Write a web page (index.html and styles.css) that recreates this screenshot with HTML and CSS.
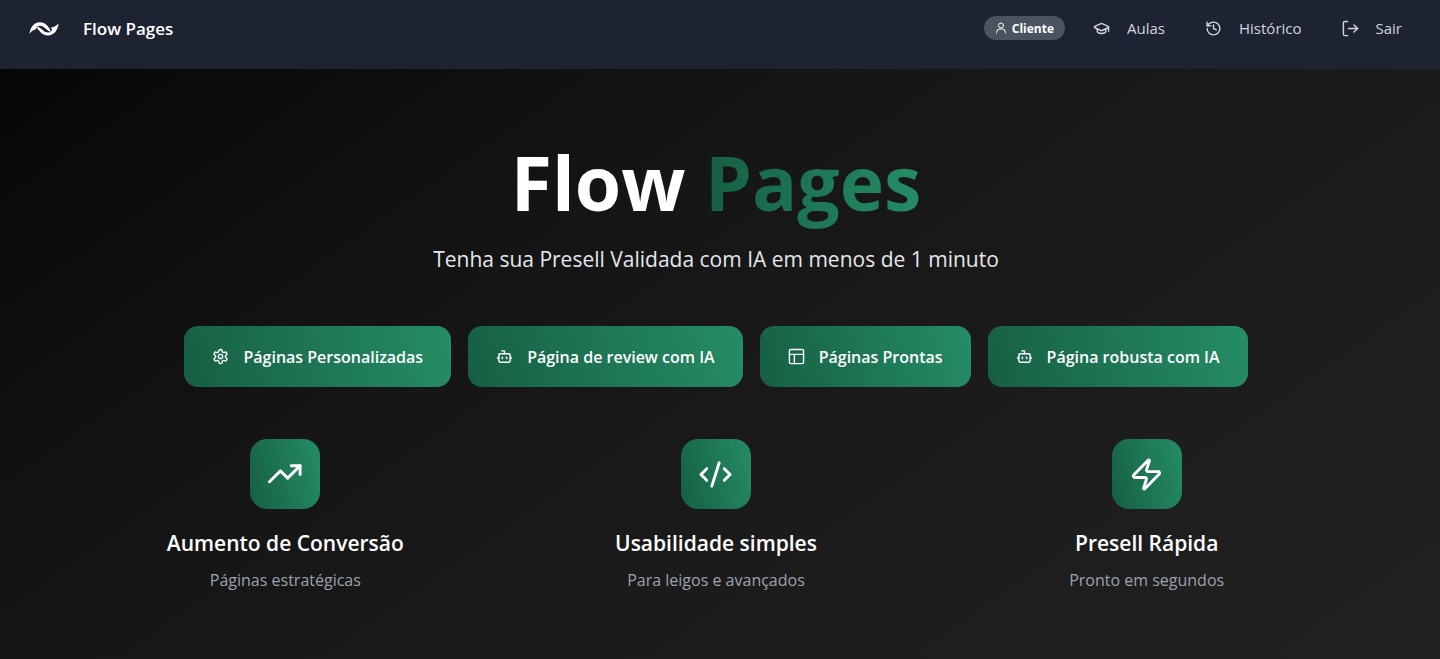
FILE: index.html
```html
<!DOCTYPE html>
<html lang="pt-BR">
<head>
  <meta charset="UTF-8">
  <meta name="viewport" content="width=device-width, initial-scale=1.0">
  <title>Flow Pages</title>
  <link rel="stylesheet" href="styles.css">
</head>
<body>

  <header class="navbar">
    <a class="brand" href="#">
      <svg class="brand-logo" viewBox="0 0 30 16" fill="currentColor">
        <path d="M0.500 13 C1 6 5.500 1.300 11 1.300 C16.500 1.300 19 5 21.500 9.500 C22 10.500 21 11 20 10.300 C16.500 8 14.500 4.800 11 4.800 C8.500 4.800 7.500 6.500 7 8.200 C4.500 8.500 2.500 10 0.500 13 Z"/>
        <path d="M29.500 2.500 C29 9.500 24.500 14.500 19 14.500 C13.500 14.500 11 10.500 8.300 7.500 C7.800 6.300 9 5.600 10 6.300 C13.500 8.500 15.500 11.500 19 11.500 C21.500 11.500 22.800 10 23.300 8.500 L21.500 6.800 C24.500 6.500 27 5 29.500 2.500 Z"/>
      </svg>
      <span class="brand-name">Flow Pages</span>
    </a>

    <nav class="nav-links">
      <span class="badge">
        <svg class="icon icon-xs" viewBox="0 0 24 24"><circle cx="12" cy="7" r="5"/><path d="M3 22v-1a7 7 0 0 1 7-7h4a7 7 0 0 1 7 7v1"/></svg>
        Cliente
      </span>
      <a class="nav-link" href="#">
        <svg class="icon icon-sm" viewBox="0 0 24 24"><path d="M21.420 10.922a1 1 0 0 0-.019-1.838L12.830 5.180a2 2 0 0 0-1.660 0L2.600 9.080a1 1 0 0 0 0 1.832l8.570 3.908a2 2 0 0 0 1.660 0z"/><path d="M22 10v6"/><path d="M6 12.500V16a6 3 0 0 0 12 0v-3.500"/></svg>
        Aulas
      </a>
      <a class="nav-link" href="#">
        <svg class="icon icon-sm" viewBox="0 0 24 24"><path d="M3 12a9 9 0 1 0 9-9 9.750 9.750 0 0 0-6.740 2.740L3 8"/><path d="M3 3v5h5"/><path d="M12 7v5l4 2"/></svg>
        Histórico
      </a>
      <a class="nav-link" href="#">
        <svg class="icon icon-sm" viewBox="0 0 24 24"><path d="M8 22H4a2 2 0 0 1-2-2V4a2 2 0 0 1 2-2h4"/><path d="m17 17 5-5-5-5"/><path d="M22 12H9"/></svg>
        Sair
      </a>
    </nav>
  </header>

  <main class="hero">
    <h1 class="title">Flow <span class="title-accent">Pages</span></h1>
    <p class="subtitle">Tenha sua Presell Validada com IA em menos de 1 minuto</p>

    <div class="actions">
      <button class="btn" type="button">
        <svg class="icon icon-sm" viewBox="0 0 24 24"><path d="M12.220 2h-.44a2 2 0 0 0-2 2v.18a2 2 0 0 1-1 1.730l-.43.25a2 2 0 0 1-2 0l-.15-.08a2 2 0 0 0-2.730.73l-.22.38a2 2 0 0 0 .73 2.730l.15.1a2 2 0 0 1 1 1.720v.51a2 2 0 0 1-1 1.740l-.15.09a2 2 0 0 0-.73 2.730l.22.38a2 2 0 0 0 2.730.73l.15-.08a2 2 0 0 1 2 0l.43.25a2 2 0 0 1 1 1.730V20a2 2 0 0 0 2 2h.44a2 2 0 0 0 2-2v-.18a2 2 0 0 1 1-1.730l.43-.25a2 2 0 0 1 2 0l.15.08a2 2 0 0 0 2.730-.73l.22-.39a2 2 0 0 0-.73-2.730l-.15-.08a2 2 0 0 1-1-1.740v-.5a2 2 0 0 1 1-1.740l.15-.09a2 2 0 0 0 .73-2.730l-.22-.38a2 2 0 0 0-2.730-.73l-.15.08a2 2 0 0 1-2 0l-.43-.25a2 2 0 0 1-1-1.730V4a2 2 0 0 0-2-2z"/><circle cx="12" cy="12" r="3"/></svg>
        Páginas Personalizadas
      </button>
      <button class="btn" type="button">
        <svg class="icon icon-sm" viewBox="0 0 24 24"><path d="M12 8V4H8"/><rect width="16" height="12" x="4" y="8" rx="2"/><path d="M2 14h2"/><path d="M20 14h2"/><path d="M15 13v2"/><path d="M9 13v2"/></svg>
        Página de review com IA
      </button>
      <button class="btn" type="button">
        <svg class="icon icon-sm" viewBox="0 0 24 24"><rect width="20" height="20" x="2" y="2" rx="2"/><path d="M2 9h20"/><path d="M9 22V9"/></svg>
        Páginas Prontas
      </button>
      <button class="btn" type="button">
        <svg class="icon icon-sm" viewBox="0 0 24 24"><path d="M12 8V4H8"/><rect width="16" height="12" x="4" y="8" rx="2"/><path d="M2 14h2"/><path d="M20 14h2"/><path d="M15 13v2"/><path d="M9 13v2"/></svg>
        Página robusta com IA
      </button>
    </div>

    <div class="features">
      <div class="feature">
        <div class="feature-icon">
          <svg class="icon icon-lg" viewBox="0 0 24 24"><path d="M16 6h6v6"/><path d="m22 6-8.500 8.500-5-5L1 17"/></svg>
        </div>
        <h2 class="feature-title">Aumento de Conversão</h2>
        <p class="feature-text">Páginas estratégicas</p>
      </div>
      <div class="feature">
        <div class="feature-icon">
          <svg class="icon icon-lg" viewBox="0 0 24 24"><path d="m18 16 4-4-4-4"/><path d="m6 8-4 4 4 4"/><path d="m14.500 4-5 16"/></svg>
        </div>
        <h2 class="feature-title">Usabilidade simples</h2>
        <p class="feature-text">Para leigos e avançados</p>
      </div>
      <div class="feature">
        <div class="feature-icon">
          <svg class="icon icon-lg" viewBox="0 0 24 24"><path d="M4 14a1 1 0 0 1-.78-1.630l9.900-10.200a.5.5 0 0 1 .86.46l-1.920 6.020A1 1 0 0 0 13 10h7a1 1 0 0 1 .78 1.630l-9.900 10.200a.5.5 0 0 1-.86-.46l1.920-6.020A1 1 0 0 0 11 14z"/></svg>
        </div>
        <h2 class="feature-title">Presell Rápida</h2>
        <p class="feature-text">Pronto em segundos</p>
      </div>
    </div>
  </main>

</body>
</html>
```

FILE: styles.css
```css
* {
  box-sizing: border-box;
  margin: 0;
  padding: 0;
}

body {
  min-height: 100vh;
  display: flex;
  flex-direction: column;
  font-family: "Open Sans", "Noto Sans", sans-serif;
  background: linear-gradient(145deg, #040404 0%, #0c0c0d 15%, #151515 38%, #1b1b1b 65%, #222 100%);
  color: #fff;
}

a {
  color: inherit;
  text-decoration: none;
}

.icon {
  flex-shrink: 0;
  fill: none;
  stroke: currentColor;
  stroke-width: 2;
  stroke-linecap: round;
  stroke-linejoin: round;
}

.icon-xs {
  width: 12px;
  height: 12px;
}

.icon-sm {
  width: 17px;
  height: 17px;
}

.icon-lg {
  width: 35px;
  height: 35px;
}

/* Navbar */
.navbar {
  display: flex;
  justify-content: space-between;
  align-items: flex-start;
  height: 69px;
  padding: 16px 38px 0 29px;
  background: #1e2332;
}

.brand {
  display: flex;
  align-items: center;
  gap: 24px;
}

.brand-logo {
  width: 30px;
  height: 16px;
}

.brand-name {
  font-size: 17px;
  line-height: 26px;
  font-weight: 600;
}

.nav-links {
  display: flex;
  align-items: center;
  color: #d1d5db;
}

.badge {
  display: flex;
  align-items: center;
  gap: 5px;
  height: 24px;
  margin-right: 28px;
  padding: 0 11px;
  border-radius: 12px;
  background: #4b5260;
  color: #fff;
  font-size: 12px;
  font-weight: 700;
}

.nav-link {
  display: flex;
  align-items: center;
  gap: 17px;
  font-size: 15px;
  line-height: 24px;
}

.nav-link + .nav-link {
  margin-left: 40px;
}

/* Hero */
.hero {
  flex: 1;
  display: flex;
  flex-direction: column;
  align-items: center;
  padding: 69px 78px 40px 70px;
  text-align: center;
}

.title {
  font-size: 75px;
  line-height: 88px;
  font-weight: 700;
}

.title-accent {
  background: linear-gradient(90deg, #165f43, #258d66);
  background-clip: text;
  -webkit-background-clip: text;
  color: transparent;
}

.subtitle {
  margin-top: 17px;
  font-size: 21px;
  line-height: 32px;
  color: #e5e7eb;
}

.actions {
  display: flex;
  flex-wrap: wrap;
  justify-content: center;
  gap: 17px;
  margin-top: 51px;
}

.btn {
  display: flex;
  align-items: center;
  gap: 14px;
  height: 61px;
  padding: 0 28px;
  border: none;
  border-radius: 14px;
  background: linear-gradient(75deg, #165f43, #258d66);
  color: #fff;
  font-family: inherit;
  font-size: 16px;
  font-weight: 600;
  cursor: pointer;
}

.features {
  display: grid;
  grid-template-columns: repeat(3, 1fr);
  width: 100%;
  margin-top: 52px;
}

.feature {
  display: flex;
  flex-direction: column;
  align-items: center;
}

.feature-icon {
  display: flex;
  align-items: center;
  justify-content: center;
  width: 70px;
  height: 70px;
  border-radius: 17px;
  background: linear-gradient(75deg, #165f43, #258d66);
}

.feature-title {
  margin-top: 18px;
  font-size: 21px;
  line-height: 32px;
  font-weight: 600;
}

.feature-text {
  margin-top: 8px;
  font-size: 16px;
  line-height: 26px;
  color: #9ca3af;
}
```
